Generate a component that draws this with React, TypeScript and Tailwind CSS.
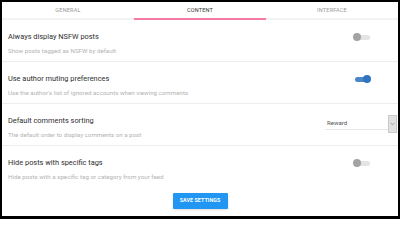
import React, { useState } from "react";

interface rowType {
  title: string;
  desc: string;
  kind: "toggle" | "select";
  on?: boolean;
}

const rows: rowType[] = [
  { title: "Always display NSFW posts", desc: "Show posts tagged as NSFW by default", kind: "toggle", on: false },
  { title: "Use author muting preferences", desc: "Use the author's list of ignored accounts when viewing comments", kind: "toggle", on: true },
  { title: "Default comments sorting", desc: "The default order to display comments on a post", kind: "select" },
  { title: "Hide posts with specific tags", desc: "Hide posts with a specific tag or category from your feed", kind: "toggle", on: false },
];

const Toggle = ({ on }: { on: boolean }) => {
  return (
    <div className="relative w-[18px] h-[8px] mr-[27px] mt-[1px]">
      <div
        className={
          on
            ? "absolute left-[2px] top-[1.5px] w-[13px] h-[5px] rounded-full bg-[#4a86c8]"
            : "absolute left-[2px] top-[1.5px] w-[15px] h-[5px] rounded-full bg-[#e4e4e4]"
        }
      />
      <div
        className={
          on
            ? "absolute left-[10px] top-0 w-[8px] h-[8px] rounded-full bg-[#2f74c0]"
            : "absolute left-0 top-0 w-[8px] h-[8px] rounded-full bg-[#a3a3a3]"
        }
      />
    </div>
  );
};

const SortSelect = () => {
  return (
    <div className="flex items-start w-[72px] mr-[1px] -mt-[1px]">
      <div className="flex-1 h-[15px] border-b border-[#e6e6e6] flex items-center pl-[2px] text-[6px] text-[#555]">
        Reward
      </div>
      <div className="w-[9px] h-[18px] bg-[#e2e2e2] border border-[#c9c9c9] flex items-center justify-center">
        <svg width="5" height="4" viewBox="0 0 5 4">
          <path d="M0.7 1 L2.5 2.8 L4.3 1" stroke="#888" strokeWidth="0.8" fill="none" />
        </svg>
      </div>
    </div>
  );
};

const App = () => {
  const [tab] = useState("content");

  return (
    <div
      className="w-[400px] h-[219px] bg-black pt-[2px] px-[2px] pb-[3px]"
      style={{ fontFamily: "Roboto, 'Noto Sans', sans-serif" }}
    >
      <div className="w-full h-full bg-white flex flex-col">
        <div className="flex h-[18px] border-b-2 border-[#f3f3f3]">
          {["general", "content", "interface"].map((t) => (
            <div
              key={t}
              className={
                tab === t
                  ? "flex-1 flex items-center justify-center text-[5.5px] uppercase tracking-[0.2px] text-[#333] border-b-2 border-[#f47ba3] -mb-[2px]"
                  : "flex-1 flex items-center justify-center text-[5.5px] uppercase tracking-[0.2px] text-[#9a9a9a]"
              }
            >
              {t}
            </div>
          ))}
        </div>

        {rows.map((row, i) => (
          <div
            key={row.title}
            className={
              i < rows.length - 1
                ? "h-[42px] flex justify-between items-start pl-[6px] pt-[12px] border-b border-[#eeeeee]"
                : "flex justify-between items-start pl-[6px] pt-[12px]"
            }
          >
            <div className="flex flex-col">
              <div className="h-[10px] leading-[10px] text-[7.4px] font-normal text-[#2e2e2e]">{row.title}</div>
              <div className="h-[8px] leading-[8px] mt-[5px] text-[6.2px] text-[#b3b3b3]">{row.desc}</div>
            </div>
            {row.kind === "toggle" ? <Toggle on={!!row.on} /> : <SortSelect />}
          </div>
        ))}

        <div className="flex justify-center mt-[12px]">
          <button className="w-[55px] h-[16px] bg-[#2196f3] rounded-[1px] text-white text-[5.3px] font-bold tracking-[0.1px] shadow-sm">
            SAVE SETTINGS
          </button>
        </div>
      </div>
    </div>
  );
};

export default App;
